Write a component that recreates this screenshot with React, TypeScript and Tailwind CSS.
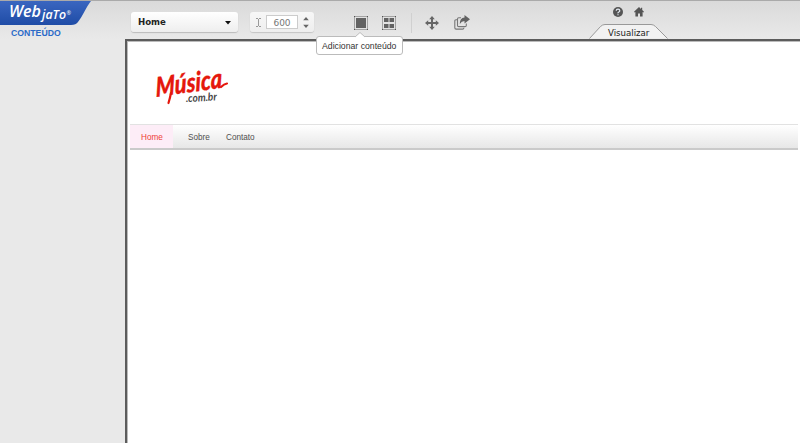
import React from "react";

function WebjatoLogo() {
  return (
    <svg width="92" height="26" viewBox="0 0 92 26" className="block" role="img" aria-label="Webjato">
      <defs>
        <linearGradient id="brand" x1="0" y1="0" x2="0" y2="1">
          <stop offset="0" stopColor="#3a66c0" />
          <stop offset="1" stopColor="#1f4ca6" />
        </linearGradient>
      </defs>
      <path d="M0 1H91C86 7 83 16 78 22Q76 25 71 25H0Z" fill="url(#brand)" />
      <g fill="#fff" fontFamily="'Open Sans', sans-serif" fontStyle="italic">
        <text x="9" y="17" fontSize="15.5" fontWeight="600" textLength="32" lengthAdjust="spacingAndGlyphs">Web</text>
        <text x="42" y="18.5" fontSize="12.5" fontWeight="600" textLength="24" lengthAdjust="spacingAndGlyphs">jaTo</text>
        <text x="66.5" y="15" fontSize="5.5">®</text>
      </g>
    </svg>
  );
}

function MusicaLogo() {
  return (
    <svg width="90" height="52" viewBox="0 0 90 52" className="block overflow-visible" role="img" aria-label="Música.com.br">
      <g fontFamily="Lato, sans-serif" fontStyle="italic">
        <text transform="translate(4 31) rotate(-8) skewX(-6)" fill="#e5180d" stroke="#e5180d" strokeWidth=".3" fontWeight="900" fontSize="27" textLength="67" lengthAdjust="spacingAndGlyphs">Música</text>
        <path d="M19 27Q18 32 16.5 37M69 21Q72 18 75 17.5" stroke="#e5180d" strokeWidth="2.2" strokeLinecap="round" fill="none" />
        <text transform="translate(34 36) rotate(-3)" fill="#454545" fontSize="11" fontWeight="700" textLength="31" lengthAdjust="spacingAndGlyphs">.com.br</text>
      </g>
    </svg>
  );
}

function ContentIcon() {
  return (
    <svg width="14" height="14" viewBox="0 0 14 14" className="block">
      <rect x=".5" y=".5" width="13" height="13" fill="#e2e2e2" stroke="#a3a3a3" />
      <rect x="2" y="2" width="10" height="10" fill="#626262" />
      <path d="M0 0h1v1H0zM13 0h1v1h-1zM0 13h1v1H0zM13 13h1v1h-1z" fill="#555" />
    </svg>
  );
}

function GridIcon() {
  return (
    <svg width="14" height="14" viewBox="0 0 14 14" className="block">
      <rect x=".5" y=".5" width="13" height="13" fill="#e2e2e2" stroke="#a3a3a3" />
      <path d="M2 2h4.5v4H2zM7.5 2H12v4H7.5zM2 8h4.5v4H2zM7.5 8H12v4H7.5z" fill="#626262" />
      <path d="M0 0h1v1H0zM13 0h1v1h-1zM0 13h1v1H0zM13 13h1v1h-1z" fill="#555" />
    </svg>
  );
}

function MoveIcon() {
  return (
    <svg width="14" height="14" viewBox="0 0 14 14" className="block" fill="#666">
      <path d="M7 0 9.8 3.2H8v2.8h2.8V4.2L14 7l-3.2 2.8V8H8v2.8h1.8L7 14l-2.8-3.2H6V8H3.2v1.8L0 7l3.2-2.8V6H6V3.2H4.2Z" />
    </svg>
  );
}

function ShareIcon() {
  return (
    <svg width="17" height="15" viewBox="0 0 17 15" className="block">
      <path d="M3 4.7H2Q.8 4.7.8 6V12.8Q.8 14.1 2.1 14.1H8.6Q9.9 14.1 9.9 12.8" stroke="#777" strokeWidth="1.1" fill="none" />
      <path d="M7 2.7H4.7Q3.5 2.7 3.5 4V10.4Q3.5 11.6 4.7 11.6H11Q12.3 11.6 12.3 10.4V8.6" stroke="#777" strokeWidth="1.1" fill="none" />
      <path d="M10.5 0 16 4.3 10.5 8.5V6Q7.5 6 5.8 9Q5.8 2.8 10.5 2.6Z" fill="#626262" />
    </svg>
  );
}

function Stepper() {
  return (
    <svg width="6" height="11" viewBox="0 0 6 11" className="block" fill="#666">
      <path d="M3 0 5.8 3.2H.2ZM.2 7.8h5.6L3 11Z" />
    </svg>
  );
}

function ViewTab() {
  return (
    <div className="relative h-[15px] w-[80px]">
      <svg width="80" height="15" viewBox="0 0 80 15" className="absolute left-0 top-0">
        <path d="M.5 14.5 11.5 2.5Q13.5.5 16 .5H62Q64.5.5 66.5 2.5L78.5 14.5" fill="#f2f2f2" stroke="#999" />
      </svg>
      <div className="relative whitespace-nowrap pl-[19px] pt-[2px] font-['DejaVu_Sans',sans-serif] text-[8.6px] leading-[14px] text-[#222]">
        Visualizar
      </div>
    </div>
  );
}

function Toolbar() {
  return (
    <div className="flex h-[39px] shrink-0 pl-[6px]">
      <div className="mt-[12px] flex h-[20px] w-[107px] items-center justify-between rounded-[3px] bg-linear-to-b from-white to-[#eee] pl-[7px] pr-[7px] shadow-[0_1px_1px_#bbb]">
        <span className="font-['DejaVu_Sans',sans-serif] text-[8.6px] font-bold leading-[12px] text-[#222]">Home</span>
        <svg width="6" height="4" viewBox="0 0 6 4" className="mt-[2px]"><path d="M0 0h6L3 3.5Z" fill="#111" /></svg>
      </div>
      <div className="ml-[12px] mt-[12px] flex h-[20px] w-[64px] items-center rounded-[3px] bg-linear-to-b from-[#f7f7f7] to-[#eee] pl-[6px] shadow-[0_1px_1px_#c4c4c4]">
        <svg width="5" height="9" viewBox="0 0 5 9"><path d="M0 .5h2M3 .5h2M0 8.5h2M3 8.5h2M2.5 1v7" stroke="#999" fill="none" /></svg>
        <div className="ml-[5px] flex h-[14px] w-[32px] items-center justify-center border border-[#ccc] bg-white pt-px font-['DejaVu_Sans',sans-serif] text-[9px] leading-[12px] text-[#777]">600</div>
        <div className="ml-[5px]"><Stepper /></div>
      </div>
      <div className="ml-[40px] mt-[16px]"><ContentIcon /></div>
      <div className="ml-[14px] mt-[16px]"><GridIcon /></div>
      <div className="ml-[15px] mt-[13px] h-[20px] w-px bg-[#d0d0d0]" />
      <div className="ml-[13px] mt-[16px]"><MoveIcon /></div>
      <div className="ml-[15px] mt-[15px]"><ShareIcon /></div>
      <div className="ml-[118px] flex flex-col pt-[7px]">
        <div className="flex h-[18px] pl-[24px]">
          <svg width="10" height="10" viewBox="0 0 10 10">
            <circle cx="5" cy="5" r="5" fill="#555" />
            <path d="M3.2 3.8Q3.3 2.2 5 2.2T6.8 3.7Q6.8 4.5 5.8 5T5 6.3M5 7.2v1.1" stroke="#e4eaf1" strokeWidth="1.2" fill="none" />
          </svg>
          <svg width="10" height="10" viewBox="0 0 10 10" className="ml-[11px]">
            <path d="M5 0 0 4.7.7 5.5 1.4 5V9.5H4V6.5H6V9.5H8.6V5L9.3 5.5 10 4.7 8.2 3V.7H7V2Z" fill="#555" />
          </svg>
        </div>
        <ViewTab />
      </div>
    </div>
  );
}

function SiteMenu() {
  return (
    <div className="ml-[2px] flex h-[26px] w-[668px] border-b-2 border-t border-b-[#cacaca] border-t-[#e2e2e2] bg-linear-to-b from-white to-[#e7e7e7] font-['Liberation_Sans',sans-serif] text-[8.2px] leading-[25px] text-[#505050]">
      <div className="w-[43px] bg-[#fdedf7] pl-[11px] text-[#ed4038]">Home</div>
      <div className="ml-[15px] w-[38px]">Sobre</div>
      <div>Contato</div>
    </div>
  );
}

export default function App() {
  return (
    <div className="relative flex h-[443px] w-[800px] overflow-hidden bg-[#e9e9e9]">
      <div className="absolute left-0 top-0 h-[39px] w-full border-t border-[#aaa] bg-linear-to-b from-[#dadada] to-[#e9e9e9]" />
      <aside className="relative w-[125px] shrink-0">
        <WebjatoLogo />
        <div className="ml-[11px] font-['Liberation_Sans',sans-serif] text-[8.7px] font-bold leading-[14px] text-[#2a6ac8]">CONTEÚDO</div>
      </aside>
      <div className="relative flex min-w-0 flex-1 flex-col">
        <Toolbar />
        <main className="flex-1 border-l-2 border-t-2 border-[#5c5c5c] bg-white">
          <div className="h-full border-l border-t border-[#bbb]">
            <div className="h-[82px] pl-[24px] pt-[24px]"><MusicaLogo /></div>
            <SiteMenu />
          </div>
        </main>
      </div>
      <div className="absolute left-[316px] top-[36px] h-[19px] w-[87px] whitespace-nowrap rounded-[3px] border border-[#bbb] bg-white pl-[5px] font-['Liberation_Sans',sans-serif] text-[8.7px] leading-[18px] text-[#333]">
        Adicionar conteúdo
        <svg width="10" height="6" viewBox="0 0 10 6" className="absolute left-[38px] top-[-5px]">
          <path d="M0 5 5 .5 10 5V6H0Z" fill="#fff" />
          <path d="M0 5 5 .5 10 5" fill="none" stroke="#bbb" />
        </svg>
      </div>
    </div>
  );
}
